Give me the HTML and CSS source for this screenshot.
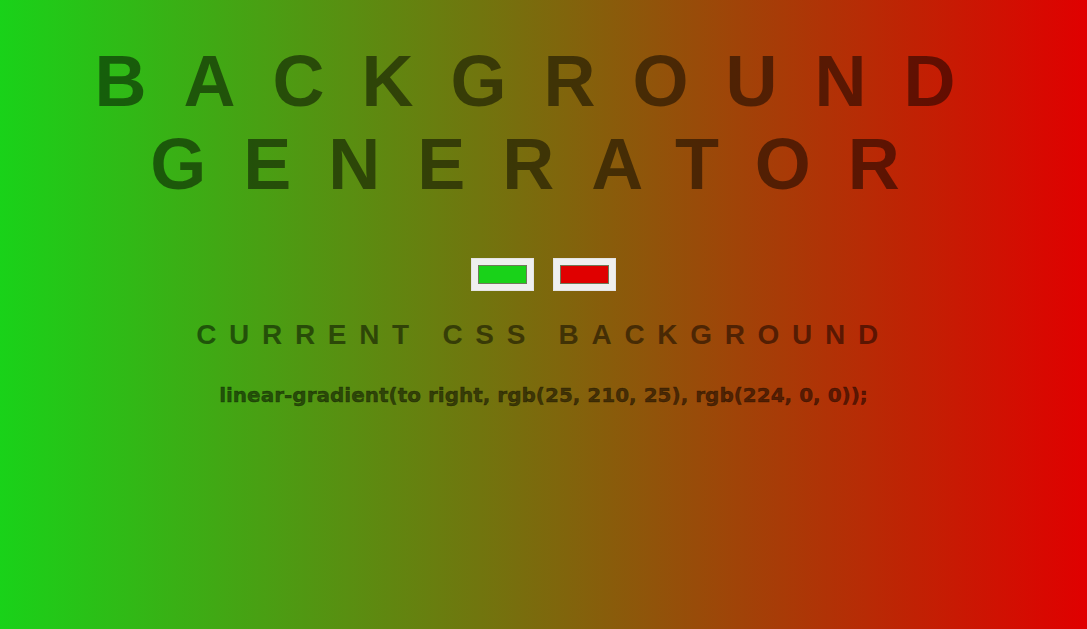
FILE: index.html
```html
<!DOCTYPE html>
<html lang="en">
<head>
<meta charset="utf-8">
<title>Background Generator</title>
<link rel="stylesheet" href="styles.css">
</head>
<body class="page">
  <main class="app">
    <h1 class="title">Background Generator</h1>
    <div class="pickers">
      <input class="picker" type="color" name="color1" value="#19d219">
      <input class="picker" type="color" name="color2" value="#e00000">
    </div>
    <h3 class="subtitle">Current CSS Background</h3>
    <p class="css-value">linear-gradient(to right, rgb(25, 210, 25), rgb(224, 0, 0));</p>
  </main>
</body>
</html>
```
FILE: styles.css
```css
html {
  height: 100%;
}

.page {
  margin: 0;
  min-height: 100%;
  background: linear-gradient(to right, rgb(25, 210, 25), rgb(224, 0, 0));
  font-family: "Liberation Sans", Arial, sans-serif;
  color: rgba(0, 0, 0, 0.5);
  text-align: center;
}

.app {
  display: flex;
  flex-direction: column;
  align-items: center;
  padding: 40px 8px 0;
}

.title {
  margin: 0;
  width: 100%;
  font-size: 72px;
  font-weight: 700;
  line-height: 83px;
  letter-spacing: 37px;
  text-transform: uppercase;
}

.pickers {
  display: flex;
  gap: 19px;
  margin-top: 52px;
}

.picker {
  -webkit-appearance: none;
  appearance: none;
  width: 63px;
  height: 33px;
  box-sizing: border-box;
  padding: 6px;
  margin: 0;
  border: 1px solid #e4e4e4;
  background: #efefef;
  cursor: pointer;
}

.picker::-webkit-color-swatch-wrapper {
  padding: 0;
}

.picker::-webkit-color-swatch {
  border: 1px solid #6f7a5a;
}

.subtitle {
  margin: 28px 0 0;
  font-size: 28px;
  font-weight: 700;
  letter-spacing: 12.7px;
  text-transform: uppercase;
}

.css-value {
  margin: 33px 0 0;
  font-family: "DejaVu Sans", "Liberation Sans", sans-serif;
  font-size: 20px;
  font-weight: 700;
  line-height: 23px;
  -webkit-text-stroke: 0.5px rgba(0, 0, 0, 0.5);
}
```
